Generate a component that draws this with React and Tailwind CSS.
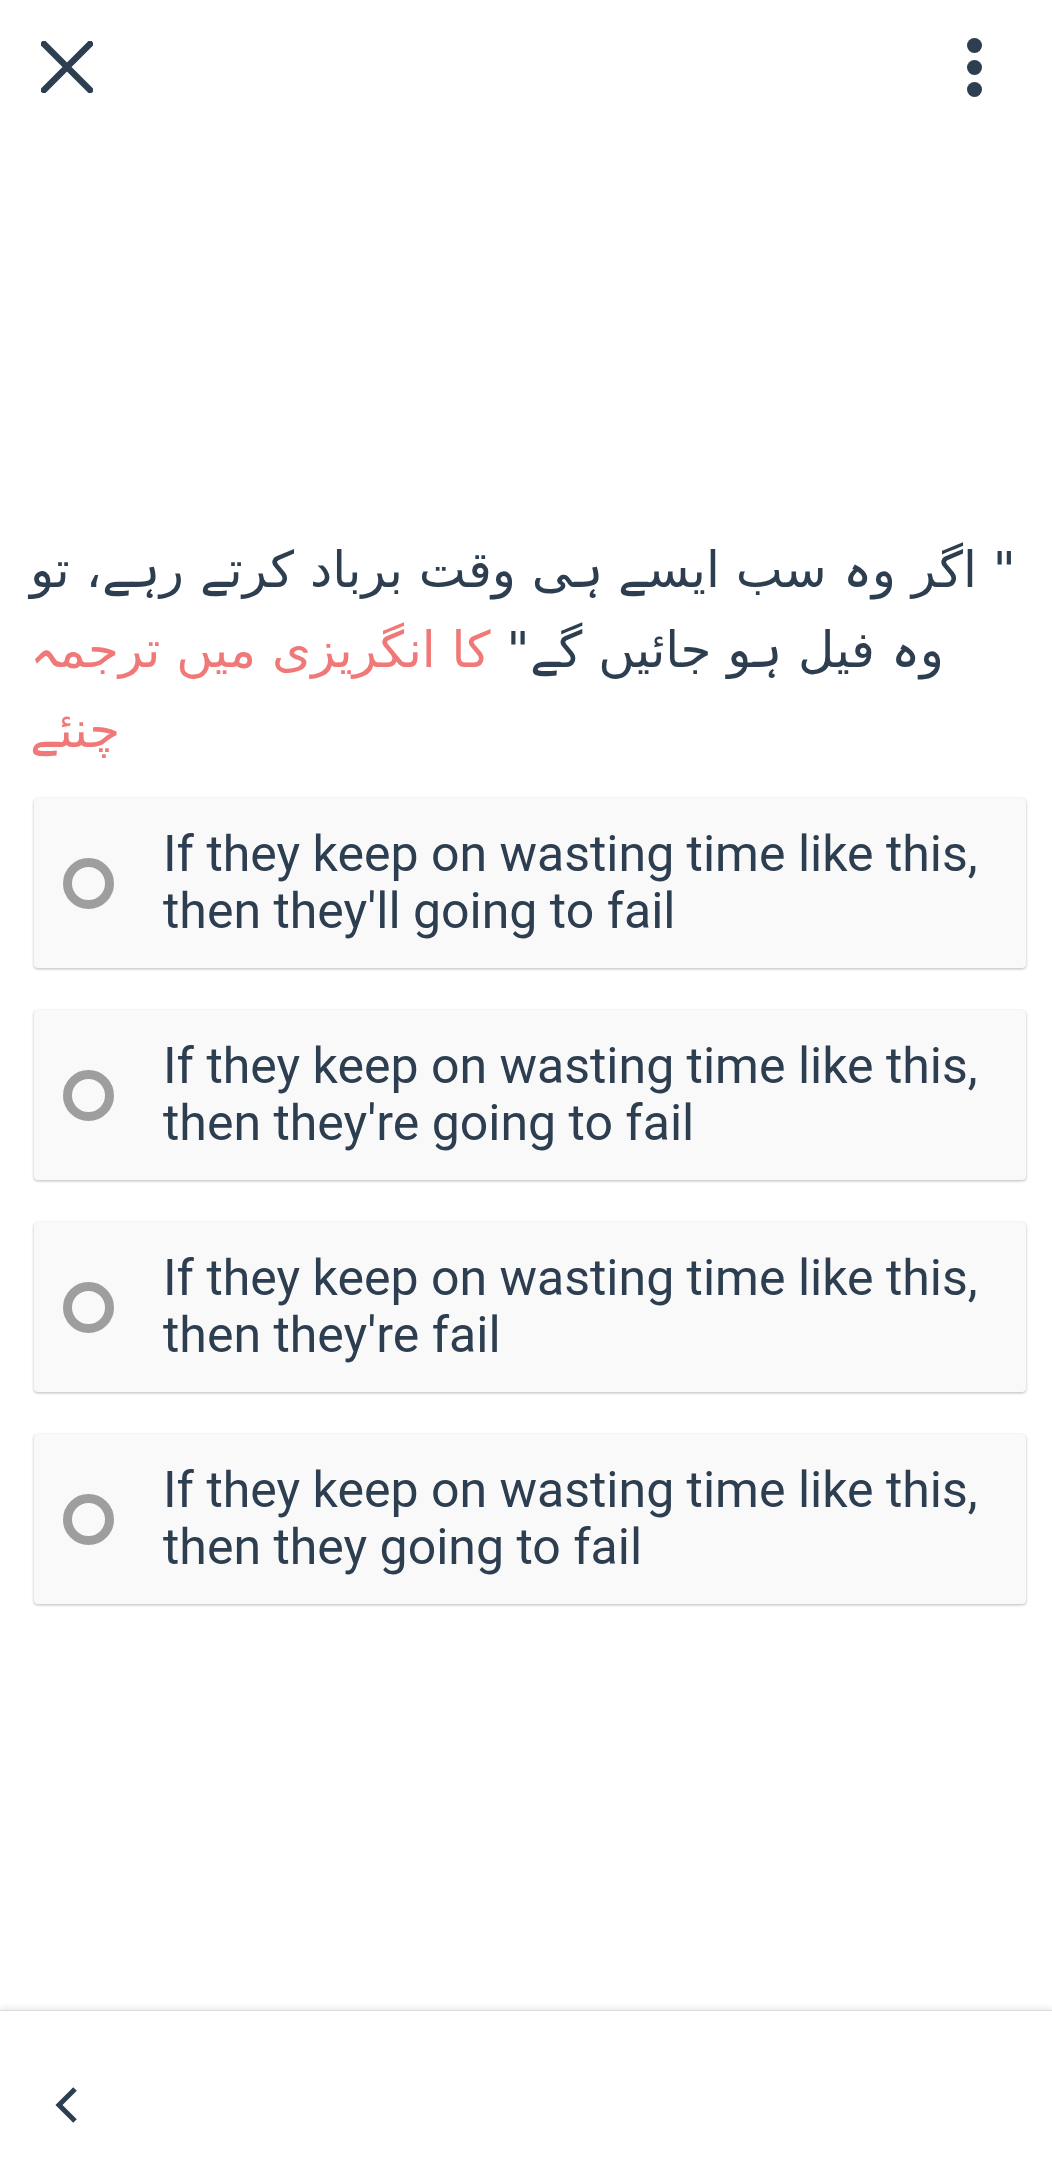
import { useState } from 'react';

const options = [
  "If they keep on wasting time like this, then they'll going to fail",
  "If they keep on wasting time like this, then they're going to fail",
  "If they keep on wasting time like this, then they're fail",
  'If they keep on wasting time like this, then they going to fail',
];

function CloseIcon() {
  return (
    <svg width="52" height="52" viewBox="0 0 52 52">
      <path d="M3 3 L49 49 M49 3 L3 49" stroke="#2c3e50" strokeWidth="6.5" strokeLinecap="round" fill="none" />
    </svg>
  );
}

function MoreIcon() {
  return (
    <div className="flex flex-col items-center gap-[7px]">
      <span className="w-[15px] h-[15px] rounded-full bg-[#2c3e50]" />
      <span className="w-[15px] h-[15px] rounded-full bg-[#2c3e50]" />
      <span className="w-[15px] h-[15px] rounded-full bg-[#2c3e50]" />
    </div>
  );
}

export default function App() {
  const [selected, setSelected] = useState(null);

  return (
    <div className="min-h-screen flex flex-col bg-white font-['Roboto','Liberation_Sans',sans-serif] text-[#2c3e50]">
      {/* top bar */}
      <div className="h-[134px] flex items-center justify-between pl-[41px] pr-[70px]">
        <button className="flex items-center justify-center">
          <CloseIcon />
        </button>
        <button className="flex items-center justify-center">
          <MoreIcon />
        </button>
      </div>

      {/* question, rtl text but left aligned like the app */}
      <p
        dir="rtl"
        className="mt-[396px] pl-[30px] pr-[16px] text-left text-[50px] leading-[80px] font-['DejaVu_Sans',sans-serif] whitespace-nowrap"
      >
        " اگر وہ سب ایسے ہی وقت برباد کرتے رہے، تو
        <br />
        وہ فیل ہو جائیں گے"{' '}
        <span className="text-[#f07878]">کا انگریزی میں ترجمہ</span>
        <br />
        <span className="text-[#f07878]">چنئے</span>
      </p>

      {/* options */}
      <div className="mt-[28px] ml-[34px] w-[992px] flex flex-col gap-[42px]">
        {options.map((text, i) => (
          <button
            key={i}
            onClick={() => setSelected(i)}
            className="h-[170px] flex items-center text-left bg-[#f9f9f9] rounded-[4px] shadow-[0_1px_3px_rgba(0,0,0,0.28)]"
          >
            <span className="ml-[29px] shrink-0 w-[51px] h-[51px] rounded-full border-[9px] border-[#9e9e9e]" />
            <span className="ml-[49px] pr-[20px] text-[50px] leading-[57px]">{text}</span>
          </button>
        ))}
      </div>

      {/* bottom bar */}
      <div className="mt-auto h-[158px] bg-white border-t border-[#dcdcdc] shadow-[0_-3px_5px_rgba(0,0,0,0.07)] flex items-center pl-[55px] pt-[30px]">
        <svg width="24" height="38" viewBox="0 0 24 38">
          <path d="M20 3 L4 19 L20 35" stroke="#2c3e50" strokeWidth="5" fill="none" strokeLinejoin="miter" />
        </svg>
      </div>
    </div>
  );
}
